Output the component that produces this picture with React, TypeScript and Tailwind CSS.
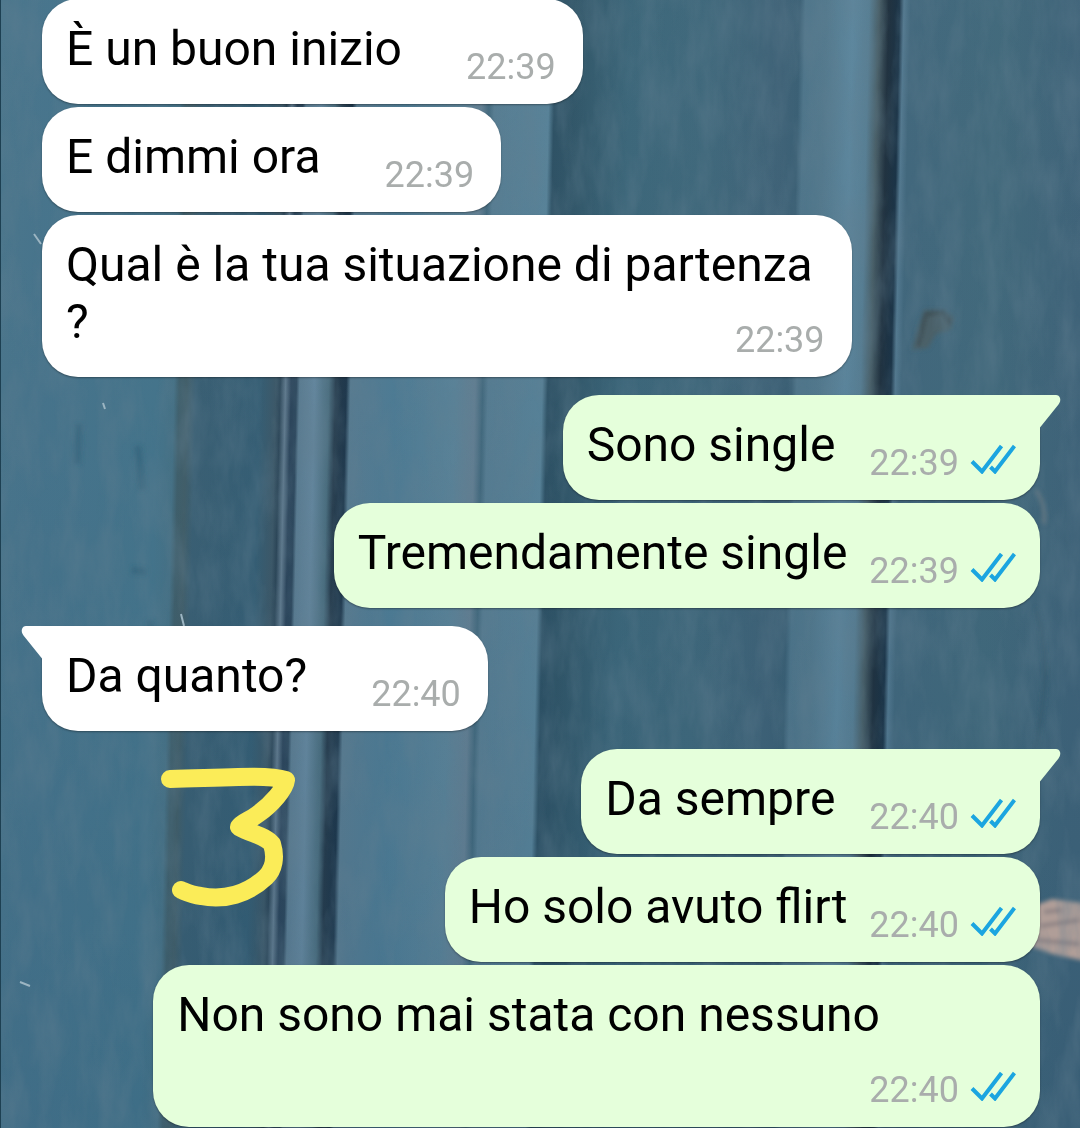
type Message = {
  lines: string[];
  time: string;
  mine?: boolean;
  tail?: boolean;
  space: string;
};

const messages: Message[] = [
  { lines: ["È un buon inizio"], time: "22:39", space: "pr-16" },
  { lines: ["E dimmi ora"], time: "22:39", space: "pr-16" },
  { lines: ["Qual è la tua situazione di partenza", "?"], time: "22:39", space: "pr-3" },
  { lines: ["Sono single"], time: "22:39", mine: true, tail: true, space: "pr-[34px]" },
  { lines: ["Tremendamente single"], time: "22:39", mine: true, space: "pr-[22px]" },
  { lines: ["Da quanto?"], time: "22:40", tail: true, space: "pr-16" },
  { lines: ["Da sempre"], time: "22:40", mine: true, tail: true, space: "pr-[34px]" },
  { lines: ["Ho solo avuto flirt"], time: "22:40", mine: true, space: "pr-[22px]" },
  { lines: ["Non sono mai stata con nessuno", ""], time: "22:40", mine: true, space: "pr-[136px]" },
];

function Ticks() {
  return (
    <svg viewBox="0 0 46 30" className="w-[46px] h-[30px] mb-2" fill="none" stroke="#1ba5e0" strokeWidth="4" role="img" aria-label="Letto">
      <path d="M2 17.500 L12 27.500 L31.500 2" />
      <path d="M20.500 23 L25 27.500 L44.500 2" />
    </svg>
  );
}

function Tail({ mine }: { mine?: boolean }) {
  return (
    <svg
      viewBox="0 0 22 34"
      className={`absolute top-0 w-[22px] h-[34px] ${mine ? "-right-[21px] text-[#e5ffdb]" : "-left-[21px] -scale-x-100 text-white"}`}
      aria-hidden="true"
    >
      <path d="M0 0 H17 Q20 0 21 3 Q22 6 19.500 9.500 L1 32.500 V34 H0 Z" fill="currentColor" />
    </svg>
  );
}

function Bubble({ lines, time, mine, tail, space }: Message) {
  const corner = tail ? (mine ? "rounded-tr-none" : "rounded-tl-none") : "";
  const upper = lines.slice(0, -1);
  const last = lines[lines.length - 1];
  return (
    <li
      className={`relative max-w-full rounded-[36px] pl-6 pt-[21px] pb-[27px] text-[48px] leading-[57px] text-black shadow-[0_1px_2px_rgba(0,0,0,0.35)] ${corner} ${
        mine ? "self-end bg-[#e5ffdb] pr-6" : "self-start bg-white pr-[27px]"
      } ${tail ? "mt-[15px]" : ""}`}
    >
      {tail && <Tail mine={mine} />}
      {upper.map((line) => (
        <p key={line} className={space}>
          {line}
        </p>
      ))}
      <div className="flex items-end justify-between h-[57px]">
        <p className={space}>{last}</p>
        <div className="flex shrink-0 items-center gap-[11px] -mb-[10px] text-[36px] leading-[40px] text-[#a9adac]">
          <time>{time}</time>
          {mine && <Ticks />}
        </div>
      </div>
    </li>
  );
}

// Painted wooden door behind the conversation
function Wallpaper() {
  return (
    <svg viewBox="0 0 1080 1128" preserveAspectRatio="none" className="absolute inset-0 size-full" aria-hidden="true">
      <defs>
        <linearGradient id="door" gradientUnits="userSpaceOnUse" x1="3" y1="0" x2="1086" y2="0">
          <stop offset="0" stopColor="#4c7990" />
          <stop offset="0.04" stopColor="#487790" />
          <stop offset="0.150" stopColor="#467890" />
          <stop offset="0.166" stopColor="#48758a" />
          <stop offset="0.171" stopColor="#40606c" />
          <stop offset="0.178" stopColor="#435f69" />
          <stop offset="0.186" stopColor="#3a6075" />
          <stop offset="0.245" stopColor="#355f76" />
          <stop offset="0.260" stopColor="#3d5868" />
          <stop offset="0.264" stopColor="#2b4456" />
          <stop offset="0.269" stopColor="#667f93" />
          <stop offset="0.274" stopColor="#2b435a" />
          <stop offset="0.279" stopColor="#2c465c" />
          <stop offset="0.282" stopColor="#5f8197" />
          <stop offset="0.296" stopColor="#6a8da5" />
          <stop offset="0.309" stopColor="#4d7182" />
          <stop offset="0.315" stopColor="#243849" />
          <stop offset="0.325" stopColor="#1b3348" />
          <stop offset="0.329" stopColor="#5c8096" />
          <stop offset="0.370" stopColor="#50809a" />
          <stop offset="0.425" stopColor="#5f889e" />
          <stop offset="0.444" stopColor="#688498" />
          <stop offset="0.451" stopColor="#436b80" />
          <stop offset="0.456" stopColor="#5a8197" />
          <stop offset="0.506" stopColor="#5b879e" />
          <stop offset="0.511" stopColor="#2c5064" />
          <stop offset="0.530" stopColor="#305669" />
          <stop offset="0.580" stopColor="#3c687c" />
          <stop offset="0.650" stopColor="#406a7e" />
          <stop offset="0.720" stopColor="#3f6379" />
          <stop offset="0.736" stopColor="#3a6076" />
          <stop offset="0.741" stopColor="#50788e" />
          <stop offset="0.760" stopColor="#557c91" />
          <stop offset="0.785" stopColor="#608ba3" />
          <stop offset="0.800" stopColor="#5a8298" />
          <stop offset="0.809" stopColor="#4a5f67" />
          <stop offset="0.818" stopColor="#1d2d3b" />
          <stop offset="0.828" stopColor="#162e42" />
          <stop offset="0.832" stopColor="#557c94" />
          <stop offset="0.838" stopColor="#42697f" />
          <stop offset="0.920" stopColor="#426b7e" />
          <stop offset="1" stopColor="#3f647b" />
        </linearGradient>
        <linearGradient id="shade" x2="0" y2="1">
          <stop offset="0" stopColor="#4b6670" stopOpacity="0.1" />
          <stop offset="1" stopColor="#1d4560" stopOpacity="0.2" />
        </linearGradient>
        <filter id="grain" x="0" y="0" width="1" height="1">
          <feTurbulence type="fractalNoise" baseFrequency="0.05 0.015" numOctaves="4" seed="8" />
          <feColorMatrix values="0 0 0 0 0.12  0 0 0 0 0.21  0 0 0 0 0.28  0.7 0 0 0 -0.240" />
        </filter>
        <filter id="soft" x="-0.5" y="-0.5" width="2" height="2">
          <feGaussianBlur stdDeviation="2" />
        </filter>
      </defs>
      <rect width="1140" height="1128" fill="url(#door)" transform="skewX(-1.3)" />
      <rect width="1080" height="1128" fill="url(#shade)" />
      <g filter="url(#soft)">
        <path d="M912 350 L918 328 L924 310 L944 310 L954 318 L950 330 L936 334 L928 348 Z" fill="#4d5f64" opacity="0.850" />
        <path d="M918 346 L926 314 L944 312 L950 324" stroke="#3a4a50" strokeWidth="3" fill="none" />
        <path d="M1034 906 L1052 899 L1090 904 V962 L1052 954 L1030 946 Z" fill="#b09e98" />
        <path d="M1040 926 L1080 920 M1036 940 L1080 944 M1044 912 L1062 910" stroke="#8b8183" strokeWidth="4" />
        <path d="M1036 490 Q1046 504 1044 524" stroke="#6c7b83" strokeWidth="3" fill="none" />
        <path d="M1036 608 Q1048 650 1044 690 T1036 748" stroke="#31576a" strokeWidth="2" fill="none" />
        <path d="M79 424 L77 464 M138 446 L142 490 M132 570 L146 572 M150 620 L152 640" stroke="#2f6079" strokeWidth="7" opacity="0.550" />
      </g>
      <rect width="1080" height="1128" filter="url(#grain)" />
      <path d="M0 0 H1 V1128 H0 Z" fill="#1d4052" />
      <path d="M181 614 L184 626 M103 403 L105 409 M34 234 L41 244 M20 982 L30 986" stroke="#9cb5c2" strokeWidth="2" />
    </svg>
  );
}

function HandDrawnThree() {
  return (
    <svg viewBox="0 0 140 144" className="absolute left-[158px] top-[765px] w-[140px] h-[144px]" role="img" aria-label="3">
      <path
        d="M12 14 C38 13 56 13 80 12 C104 11 119 12 128 15 C127 24 114 39 100 49 C91 56 84 57 81 62 C94 69 108 71 114 79 C118 92 116 104 108 112 C90 129 66 136 43 131 C34 130 28 127 23 125"
        fill="none"
        stroke="#fbec58"
        strokeWidth="18"
        strokeLinecap="round"
        strokeLinejoin="round"
      />
    </svg>
  );
}

export default function App() {
  return (
    <main className="relative isolate min-h-screen overflow-hidden bg-[#40687d] font-[Roboto,'Noto_Sans',sans-serif]">
      <Wallpaper />
      <ul className="relative -mt-px flex flex-col gap-[3px] pl-[42px] pr-10 pb-px">
        {messages.map((message) => (
          <Bubble key={message.lines[0]} {...message} />
        ))}
      </ul>
      <HandDrawnThree />
    </main>
  );
}
